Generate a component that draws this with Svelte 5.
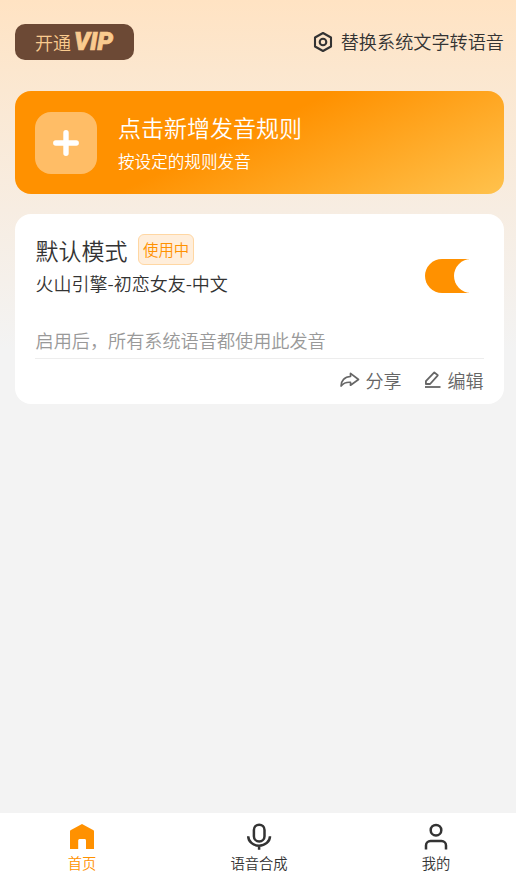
<script lang="ts">
	let enabled = $state(true);
	let active = $state('home');

	const tabs = [
		{ id: 'home', label: '首页' },
		{ id: 'speech', label: '语音合成' },
		{ id: 'mine', label: '我的' }
	];
</script>

<div class="page">
	<header class="top">
		<button class="vip" type="button">
			<span>开通</span>
			<strong>VIP</strong>
		</button>
		<button class="replace" type="button">
			<svg width="20" height="22" viewBox="0 0 20 22" fill="none" stroke="currentColor" stroke-width="2.1">
				<path d="M10 2l8 4.5v9L10 20l-8-4.5v-9z" stroke-linejoin="round" />
				<circle cx="10" cy="11" r="3.3" />
			</svg>
			<span>替换系统文字转语音</span>
		</button>
	</header>

	<button class="add" type="button">
		<span class="plus">
			<svg width="26" height="26" viewBox="0 0 26 26" stroke="#fff" stroke-width="5.4" stroke-linecap="round">
				<path d="M13 2.8v20.4M2.8 13h20.4" />
			</svg>
		</span>
		<span class="add-text">
			<span class="add-title">点击新增发音规则</span>
			<span class="add-sub">按设定的规则发音</span>
		</span>
	</button>

	<section class="card">
		<div class="rule">
			<div>
				<div class="name">
					<h2>默认模式</h2>
					<span class="badge">使用中</span>
				</div>
				<p class="voice">火山引擎-初恋女友-中文</p>
			</div>
			<button
				class="switch"
				class:on={enabled}
				type="button"
				role="switch"
				aria-checked={enabled}
				aria-label="默认模式"
				onclick={() => (enabled = !enabled)}
			></button>
		</div>
		<p class="hint">启用后，所有系统语音都使用此发音</p>
		<div class="actions">
			<button type="button">
				<svg width="20" height="16" viewBox="0 0 20 16" fill="none" stroke="currentColor" stroke-width="1.7" stroke-linejoin="round">
					<path d="M10.5 1.4l8 6.1-8 5.7v-2.9C6.500 10 3.500 11 1.100 14 1 8.900 4.600 4.700 10.500 4.500z" />
				</svg>
				<span>分享</span>
			</button>
			<button type="button">
				<svg width="18" height="18" viewBox="0 0 18 18" fill="none" stroke="currentColor" stroke-width="1.8" stroke-linejoin="round">
					<path d="M10.3 1.4l3.5 2.9-7.7 8.7H1.900V10.200z" />
					<path d="M1 16h15.5" />
				</svg>
				<span>编辑</span>
			</button>
		</div>
	</section>

	<nav class="tabs">
		{#each tabs as tab (tab.id)}
			<button type="button" class:active={active === tab.id} onclick={() => (active = tab.id)}>
				<svg width="28" height="28" viewBox="0 0 28 28" fill="none" stroke="currentColor" stroke-width="2.5">
					{#if tab.id === 'home'}
						<path d="M14 1L25.500 7.300Q26 7.600 26 8.500V26H18V17.500Q18 16 17 16H11.500Q10.200 16 10.200 17.500V26H2V8.500Q2 7.600 2.500 7.300z" fill="currentColor" stroke="none" />
					{:else if tab.id === 'speech'}
						<rect x="8.9" y="1.7" width="10.6" height="16.8" rx="5.3" />
						<path d="M3.200 13.200a10.900 9.500 0 0 0 21.800 0M14.100 22.700v4" />
					{:else}
						<circle cx="14" cy="7.2" r="5.3" />
						<path d="M4 26.500v-4a4.500 4.500 0 0 1 4.500-4.500h11a4.500 4.500 0 0 1 4.500 4.500v4" />
					{/if}
				</svg>
				<span>{tab.label}</span>
			</button>
		{/each}
	</nav>
</div>

<style>
	:global(body) {
		margin: 0;
	}
	.page {
		display: flex;
		flex-direction: column;
		box-sizing: border-box;
		height: 890px;
		padding-top: 24px;
		background: linear-gradient(#ffe3c3 0, #fbe8d2 90px, #f7ede2 210px, #f3f3f3 350px);
		color: #333;
		font-family: 'Noto Sans CJK SC', sans-serif;
		font-weight: 350;
	}
	button {
		padding: 0;
		border: none;
		background: none;
		color: inherit;
		font: inherit;
		cursor: pointer;
	}
	svg {
		display: block;
		flex: none;
	}
	h2,
	p {
		margin: 0;
		font-weight: inherit;
	}
	.top {
		display: flex;
		justify-content: space-between;
		align-items: center;
		height: 36px;
		margin: 0 12px 31px 15px;
	}
	.vip {
		display: flex;
		align-items: center;
		justify-content: center;
		gap: 3px;
		width: 119px;
		height: 36px;
		padding-right: 1px;
		border-radius: 10px;
		background: #6c4935;
		color: #facb8f;
		font-size: 18px;
		line-height: 36px;
	}
	.vip span {
		padding-bottom: 1px;
	}
	.vip strong {
		font-family: Roboto, sans-serif;
		font-size: 25px;
		font-style: italic;
		font-weight: 900;
		line-height: 36px;
		letter-spacing: -0.1px;
		-webkit-text-stroke: 0.7px currentColor;
	}
	.replace {
		display: flex;
		align-items: center;
		gap: 8px;
		font-size: 18.15px;
		line-height: 34px;
	}
	.replace span {
		padding-bottom: 2px;
	}
	.add {
		display: flex;
		align-items: center;
		flex: none;
		gap: 21px;
		height: 103px;
		margin: 0 12px 20.4px 15px;
		padding: 0 20px;
		border-radius: 16px;
		background: linear-gradient(155deg, #ff9100 45%, #ffc24d 100%);
		color: #fff;
		text-align: left;
	}
	.plus {
		display: flex;
		align-items: center;
		justify-content: center;
		width: 62px;
		height: 62px;
		border-radius: 16px;
		background: #ffbd66;
	}
	.add-text {
		display: flex;
		flex-direction: column;
		padding-top: 3px;
	}
	.add-title {
		font-size: 23px;
		line-height: 35px;
	}
	.add-sub {
		font-size: 16.6px;
		line-height: 33px;
	}
	.card {
		display: flex;
		flex-direction: column;
		box-sizing: border-box;
		height: 190px;
		margin: 0 12px 0 15px;
		padding: 19.6px 20px 0;
		border-radius: 16px;
		background: #fff;
	}
	.rule {
		display: flex;
		justify-content: space-between;
		padding-left: 0.5px;
	}
	.name {
		display: flex;
		align-items: center;
		gap: 10.5px;
		height: 32px;
	}
	.name h2 {
		font-size: 23px;
		line-height: 32px;
	}
	.badge {
		box-sizing: border-box;
		height: 31px;
		padding: 0 4px;
		border: 1px solid #ffd7a3;
		border-radius: 6px;
		background: #ffeedb;
		color: #ff9100;
		font-size: 15.4px;
		line-height: 29px;
	}
	.voice {
		font-size: 18px;
		line-height: 34px;
	}
	.switch {
		width: 59px;
		height: 34px;
		margin-top: 25px;
		overflow: hidden;
		border-radius: 17px;
		background: #ddd;
	}
	.switch::after {
		display: block;
		width: 34px;
		height: 34px;
		border-radius: 17px;
		background: #fff;
		content: '';
	}
	.switch.on {
		background: linear-gradient(90deg, #ff9100 44px, #fff 44px);
	}
	.switch.on::after {
		margin-left: 29px;
	}
	.hint {
		margin-top: 23px;
		padding: 0 0 1px 0.5px;
		border-bottom: 1px solid #ededed;
		color: #999;
		font-size: 18.15px;
		line-height: 34px;
	}
	.actions {
		display: flex;
		justify-content: flex-end;
		gap: 22px;
		padding-right: 0.5px;
		color: #666;
		font-size: 18px;
		line-height: 43px;
	}
	.actions button {
		display: flex;
		align-items: center;
		gap: 6px;
	}
	.tabs {
		display: grid;
		grid-template-columns: repeat(3, 177px);
		justify-content: center;
		height: 77px;
		margin-top: auto;
		padding-left: 2px;
		background: #fff;
	}
	.tabs button {
		display: flex;
		flex-direction: column;
		align-items: center;
		padding-top: 10px;
		font-size: 14.3px;
		line-height: 24px;
	}
	.tabs .active {
		color: #ff9100;
	}
</style>
